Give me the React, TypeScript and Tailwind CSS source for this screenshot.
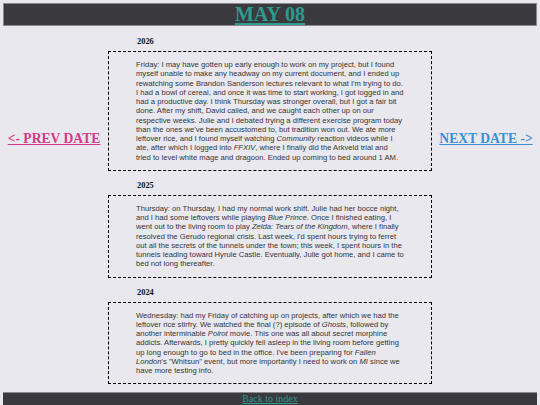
const entries = [
    {
        year: "2026",
        body: (
            <>
                Friday: I may have gotten up early enough to work on my project, but I found myself
                unable to make any headway on my current document, and I ended up rewatching some
                Brandon Sanderson lectures relevant to what I'm trying to do. I had a bowl of cereal,
                and once it was time to start working, I got logged in and had a productive day. I
                think Thursday was stronger overall, but I got a fair bit done. After my shift, David
                called, and we caught each other up on our respective weeks. Julie and I debated
                trying a different exercise program today than the ones we've been accustomed to, but
                tradition won out. We ate more leftover rice, and I found myself watching{" "}
                <i>Community</i> reaction videos while I ate, after which I logged into <i>FFXIV</i>,
                where I finally did the Arkveld trial and tried to level white mage and dragoon. Ended
                up coming to bed around 1 AM.
            </>
        ),
    },
    {
        year: "2025",
        body: (
            <>
                Thursday: on Thursday, I had my normal work shift. Julie had her bocce night, and I
                had some leftovers while playing <i>Blue Prince</i>. Once I finished eating, I went
                out to the living room to play <i>Zelda: Tears of the Kingdom</i>, where I finally
                resolved the Gerudo regional crisis. Last week, I'd spent hours trying to ferret out
                all the secrets of the tunnels under the town; this week, I spent hours in the tunnels
                leading toward Hyrule Castle. Eventually, Julie got home, and I came to bed not long
                thereafter.
            </>
        ),
    },
    {
        year: "2024",
        body: (
            <>
                Wednesday: had my Friday of catching up on projects, after which we had the leftover
                rice stirfry. We watched the final (?) episode of <i>Ghosts</i>, followed by another
                interminable <i>Poirot</i> movie. This one was all about secret morphine addicts.
                Afterwards, I pretty quickly fell asleep in the living room before getting up long
                enough to go to bed in the office. I've been preparing for <i>Fallen London</i>'s
                "Whitsun" event, but more importantly I need to work on <i>MI</i> since we have more
                testing info.
            </>
        ),
    },
];

export default function App() {
    return (
        <div className="min-h-[405px] overflow-hidden bg-[#e9e8ee] pt-[3px] font-['Liberation_Serif',serif]">
            {/* Date header */}
            <header className="mx-[3px] h-[23px] border border-[#8a8a8e] bg-[#3a393e] text-center">
                <a
                    href="#"
                    className="text-[20px] font-bold leading-[21px] text-[#2f9a8e] underline decoration-2 underline-offset-2"
                >
                    MAY 08
                </a>
            </header>

            <div className="grid grid-cols-[1fr_3fr_1fr]">
                <div className="pt-[100px] text-center">
                    <a
                        href="#"
                        className="text-[13.6px] font-bold leading-[16px] text-[#d23a88] underline"
                    >
                        &lt;- PREV DATE
                    </a>
                </div>

                <main className="flex flex-col pt-[1px]">
                    {entries.map((entry) => (
                        <section key={entry.year} className="mt-[10px]">
                            <h3 className="mb-[4px] pl-[29px] text-[8.4px] font-bold leading-[10px] text-[#111]">
                                {entry.year}
                            </h3>
                            <div className="border border-dashed border-black px-[27px] py-[8px]">
                                <p className="font-['Liberation_Sans',Arial,sans-serif] text-[7.65px] leading-[9.25px] text-[#363636]">
                                    {entry.body}
                                </p>
                            </div>
                        </section>
                    ))}
                </main>

                <div className="pt-[100px] text-center">
                    <a
                        href="#"
                        className="text-[13.6px] font-bold leading-[16px] text-[#3b8fd3] underline"
                    >
                        NEXT DATE -&gt;
                    </a>
                </div>
            </div>

            {/* Footer */}
            <footer className="mx-[3px] mt-[8px] h-[30px] border-t border-[#8a8a8e] bg-[#3a393e] text-center text-[10px] leading-[12px]">
                <a href="#" className="text-[#2f9a8e] underline">
                    Back to index
                </a>
            </footer>
        </div>
    );
}
